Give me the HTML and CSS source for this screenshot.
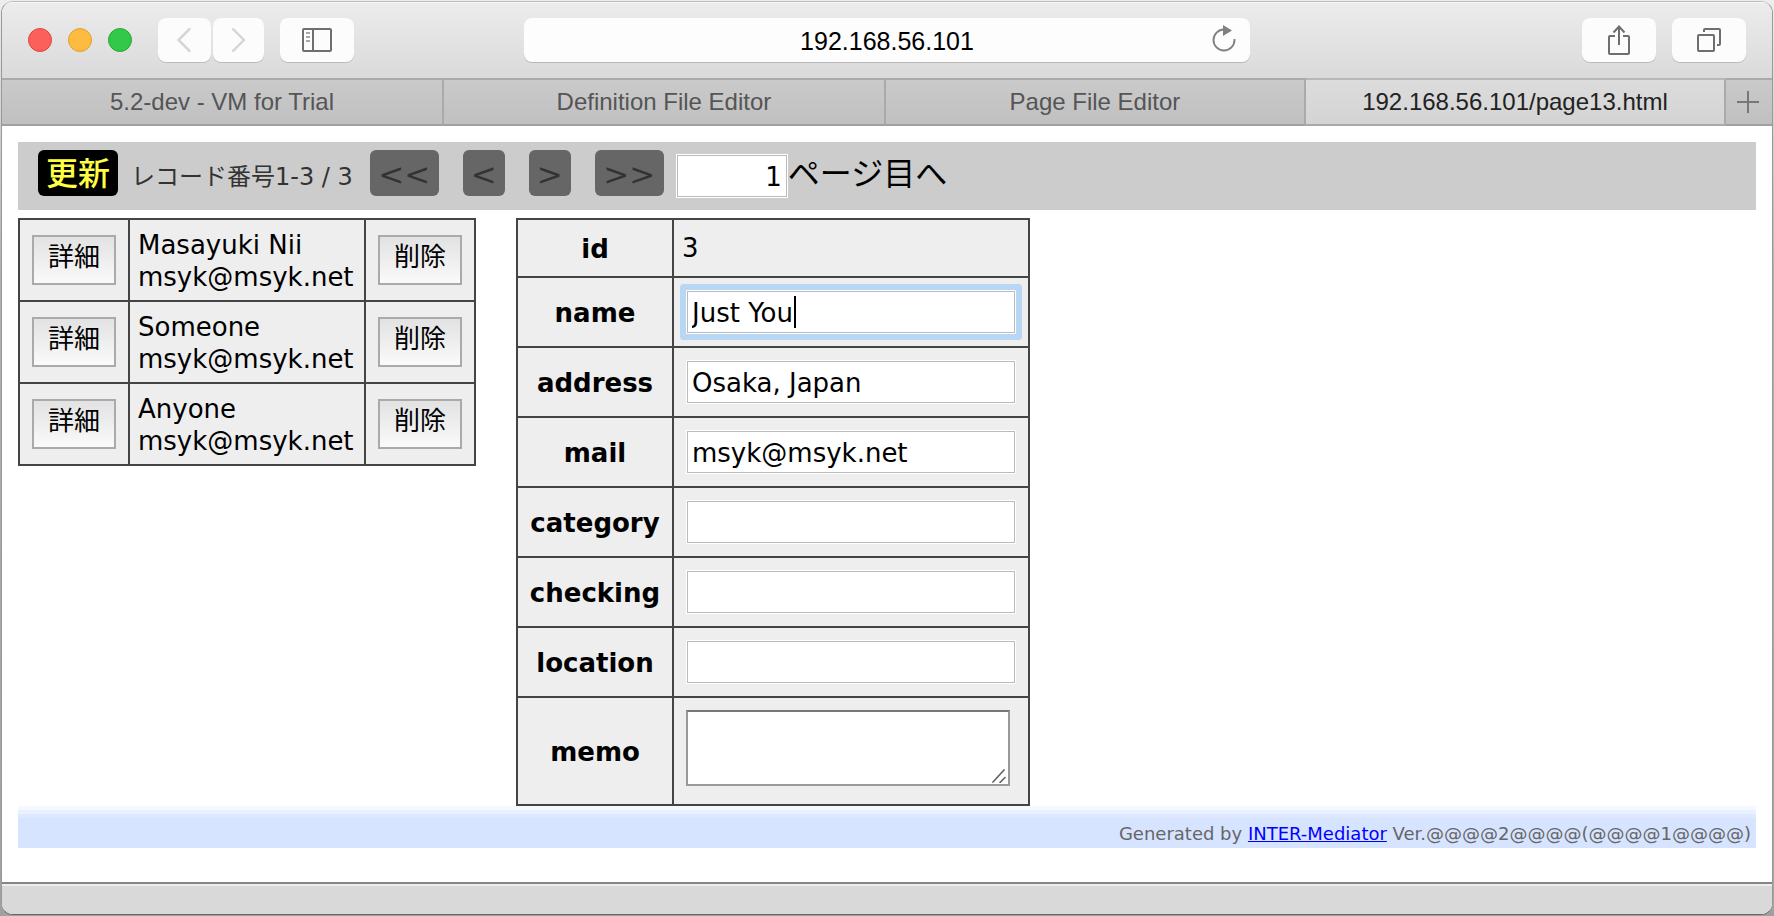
FILE: index.html
```html
<!DOCTYPE html>
<html lang="ja">
<head>
<meta charset="utf-8">
<title>192.168.56.101/page13.html</title>
<link rel="stylesheet" href="styles.css">
</head>
<body>
<div class="window">
  <header class="toolbar">
    <div class="tools tools-left">
      <div class="lights">
        <button class="light red" aria-label="Close"></button>
        <button class="light amber" aria-label="Minimize"></button>
        <button class="light green" aria-label="Zoom"></button>
      </div>
      <div class="history">
        <button class="tool back" aria-label="Back"><svg width="52" height="44" viewBox="0 0 52 44"><path d="M30.500 11 19.500 22 30.500 33" fill="none" stroke="#d6d6d6" stroke-width="2.500" stroke-linecap="round"/></svg></button>
        <button class="tool forward" aria-label="Forward"><svg width="52" height="44" viewBox="0 0 52 44"><path d="M20.500 11 31.500 22 20.500 33" fill="none" stroke="#d6d6d6" stroke-width="2.500" stroke-linecap="round"/></svg></button>
      </div>
      <button class="tool" aria-label="Sidebar"><svg width="30" height="24" viewBox="0 0 30 24"><rect x="1" y="1" width="28" height="22" rx="1" fill="none" stroke="#6e6e6e" stroke-width="2"/><path d="M11 1V23" stroke="#6e6e6e" stroke-width="2"/><path d="M4 5H8M4 9H8M4 13H8" stroke="#8a8a8a" stroke-width="1.700"/></svg></button>
    </div>
    <div class="address">
      <input class="url" type="text" value="192.168.56.101" aria-label="Address">
      <button class="reload" aria-label="Reload"><svg width="24" height="28" viewBox="0 0 24 28"><path d="M12 5.500A10.500 10.500 0 1 0 22.500 16V15" fill="none" stroke="#808080" stroke-width="1.900"/><path d="M11 1V12L20 6.500Z" fill="#808080"/></svg></button>
    </div>
    <div class="tools tools-right">
      <button class="tool" aria-label="Share"><svg width="24" height="32" viewBox="0 0 24 32"><path d="M8 12H3Q2 12 2 13V29Q2 30 3 30H21Q22 30 22 29V13Q22 12 21 12H16" fill="none" stroke="#6e6e6e" stroke-width="2"/><path d="M12 21V3M6.500 8.500 12 2.500 17.500 8.500" fill="none" stroke="#6e6e6e" stroke-width="2"/></svg></button>
      <button class="tool" aria-label="Show all tabs"><svg width="26" height="26" viewBox="0 0 26 26"><rect x="2" y="8" width="16" height="16" rx="1" fill="none" stroke="#6e6e6e" stroke-width="2"/><path d="M8 5V3Q8 2 9 2H23Q24 2 24 3V17Q24 18 23 18H21" fill="none" stroke="#6e6e6e" stroke-width="2"/></svg></button>
    </div>
  </header>
  <nav class="tabs">
    <a class="tab wide" href="#">5.2-dev - VM for Trial</a>
    <a class="tab wide" href="#">Definition File Editor</a>
    <a class="tab" href="#">Page File Editor</a>
    <a class="tab current" href="#">192.168.56.101/page13.html</a>
    <button class="add" aria-label="New tab"><svg width="22" height="22" viewBox="0 0 22 22"><path d="M11 0V22M0 11H22" stroke="#777" stroke-width="2"/></svg></button>
  </nav>
  <main class="page">
    <div class="pager">
      <button class="update">更新</button>
      <span class="count">レコード番号1-3 / 3</span>
      <div class="steps">
        <button class="step double">&lt;&lt;</button>
        <button class="step">&lt;</button>
        <button class="step">&gt;</button>
        <button class="step double">&gt;&gt;</button>
      </div>
      <input class="field jump" id="jump" type="text" value="1">
      <label for="jump">ページ目へ</label>
    </div>
    <div class="columns">
      <table class="grid">
        <tr><td class="action"><button class="push">詳細</button></td><td class="person">Masayuki Nii<br>msyk@msyk.net</td><td class="action"><button class="push">削除</button></td></tr>
        <tr><td class="action"><button class="push">詳細</button></td><td class="person">Someone<br>msyk@msyk.net</td><td class="action"><button class="push">削除</button></td></tr>
        <tr><td class="action"><button class="push">詳細</button></td><td class="person">Anyone<br>msyk@msyk.net</td><td class="action"><button class="push">削除</button></td></tr>
      </table>
      <table class="grid detail">
        <tr><th>id</th><td>3</td></tr>
        <tr><th><label for="name">name</label></th><td><div class="cell"><input class="field active" id="name" type="text" value="Just You"><span class="caret"></span></div></td></tr>
        <tr><th><label for="address">address</label></th><td><div class="cell"><input class="field" id="address" type="text" value="Osaka, Japan"></div></td></tr>
        <tr><th><label for="mail">mail</label></th><td><div class="cell"><input class="field" id="mail" type="text" value="msyk@msyk.net"></div></td></tr>
        <tr><th><label for="category">category</label></th><td><div class="cell"><input class="field" id="category" type="text"></div></td></tr>
        <tr><th><label for="checking">checking</label></th><td><div class="cell"><input class="field" id="checking" type="text"></div></td></tr>
        <tr><th><label for="location">location</label></th><td><div class="cell"><input class="field" id="location" type="text"></div></td></tr>
        <tr><th><label for="memo">memo</label></th><td><div class="cell memo-cell"><textarea class="memo" id="memo"></textarea><svg class="grip" width="14" height="14" viewBox="0 0 14 14"><path d="M1 13 12 1M8 13.500 13 8.500" stroke="#666" stroke-width="1.700" stroke-linecap="round"/></svg></div></td></tr>
      </table>
    </div>
    <footer class="credit">Generated by <a href="#">INTER-Mediator</a> Ver.@@@@2@@@@(@@@@1@@@@)</footer>
  </main>
  <div class="statusbar"></div>
</div>
</body>
</html>
```
FILE: styles.css
```css
* { box-sizing: border-box; }
body {
  display: flow-root;
  margin: 0;
  background: linear-gradient(#ededed, #b0b0b0 30%, #a0a0a0);
  font-family: "DejaVu Sans", "Noto Sans CJK JP", sans-serif;
  font-size: 26px;
  line-height: 32px;
  color: #000;
}
button, input, textarea { font: inherit; color: inherit; margin: 0; }
button { border: 0; padding: 0; }
svg { display: block; }

.window {
  display: flex;
  flex-direction: column;
  min-height: calc(100vh - 2px);
  margin: 1px;
  border: 1px solid #999;
  border-top-color: #bbb;
  border-bottom-color: #666;
  border-radius: 12px;
  background: #fff;
  overflow: hidden;
}

/* Browser toolbar */
.toolbar {
  display: grid;
  grid-template-columns: 1fr 41% 1fr;
  align-items: center;
  height: 76px;
  background: linear-gradient(#ececec, #dadada);
  box-shadow: inset 0 1px #f8f8f8;
}
.tools { display: flex; align-items: center; gap: 16px; }
.tools-left { padding-left: 26px; }
.tools-right { justify-content: flex-end; padding-right: 26px; }
.lights { display: flex; gap: 16px; margin-right: 10px; }
.light { width: 24px; height: 24px; border: 1px solid; border-radius: 50%; }
.red { background: #fc605b; border-color: #e0453f; }
.amber { background: #fdbc40; border-color: #dfa035; }
.green { background: #34c84a; border-color: #27a938; }
.history { display: flex; gap: 2px; }
.tool {
  display: flex;
  align-items: center;
  justify-content: center;
  width: 74px;
  height: 44px;
  border-radius: 8px;
  background: #fcfcfc;
  box-shadow: 0 1px #bbb;
}
.back { width: 53px; }
.forward { width: 51px; }
.address { position: relative; }
.url {
  display: block;
  width: 100%;
  height: 44px;
  padding: 2px 0 0;
  border: 0;
  border-radius: 8px;
  background: #fdfdfd;
  box-shadow: 0 1px #b8b8b8;
  font-family: "Liberation Sans", sans-serif;
  font-size: 25px;
  text-align: center;
}
.reload { position: absolute; right: 14px; top: 6px; background: none; }

/* Tabs */
.tabs {
  display: flex;
  height: 48px;
  background: #c5c5c5;
  font: 24px/44px "Liberation Sans", sans-serif;
}
.tab, .add {
  border-top: 2px solid #aaa;
  border-bottom: 2px solid #a0a0a0;
  background: linear-gradient(#cacaca, #c0c0c0);
}
.tab {
  flex: 420 1 0;
  border-right: 2px solid #aaa;
  color: #555;
  text-align: center;
  text-decoration: none;
  white-space: nowrap;
}
.wide { flex-grow: 442; }
.current { background: linear-gradient(#dcdcdc, #d4d4d4); border-top-color: #b8b8b8; border-bottom-color: #aaa; color: #222; }
.add { display: flex; flex: 0 0 46px; align-items: center; justify-content: center; padding-right: 2px; }

/* Page */
.page { flex: 1; padding: 16px; }
.pager {
  display: flex;
  align-items: center;
  height: 68px;
  padding: 0 20px 6px;
  background: #ccc;
  font-size: 32px;
}
.update, .step { height: 46px; border-radius: 6px; }
.update { padding: 2px 8px 0; background: #000; color: #ff4; font-weight: 500; }
.count { margin: 8px 17px 0 13px; font-size: 24px; color: #333; }
.steps { display: flex; gap: 24px; margin-right: 12px; }
.step { width: 42px; padding-top: 2px; background: #666; color: #333; font-size: 31px; }
.double { width: 69px; }
.field {
  display: block;
  width: 330px;
  height: 44px;
  padding: 2px 5px 0;
  border: 1px solid #fff;
  background: #fff;
  box-shadow: inset 0 0 0 1px #bbb;
  outline: 0;
}
.jump { width: 112px; margin-top: 6px; font-size: 26px; text-align: right; }
.pager label { padding-top: 2px; }
.columns { display: flex; align-items: flex-start; gap: 40px; padding-top: 8px; }
.grid { border-collapse: collapse; background: #eee; }
.grid td, .grid th { padding: 0 8px; border: 2px solid #444; text-align: left; white-space: nowrap; }
.grid tr { height: 82px; }
.grid .action { padding: 0 12px; }
.grid .person { width: 236px; padding-top: 2px; }
.push {
  display: block;
  width: 84px;
  height: 50px;
  padding-bottom: 6px;
  border: 2px solid #aaa;
  background: linear-gradient(#e2e2e2, #fafafa);
}
.grid.detail th { width: 156px; padding-top: 2px; text-align: center; }
.detail tr { height: 70px; }
.detail tr:first-child { height: 58px; }
.detail tr:last-child { height: 108px; }
.cell { position: relative; padding: 0 4px; }
.active { border-radius: 1px; box-shadow: inset 0 0 0 1px #bbb, 0 0 0 6px #b8d7f5; }
.caret { position: absolute; left: 112px; top: 6px; width: 2px; height: 32px; background: #000; }
.memo-cell { padding: 0 4px 6px; }
.memo { display: block; width: 324px; height: 76px; border: 2px solid #999; border-top-color: #777; background: #fff; resize: none; }
.grip { position: absolute; right: 14px; bottom: 9px; }
.credit {
  height: 42px;
  padding: 12px 5px 0;
  background: linear-gradient(#f5f8ff 4px, #e9f0ff 4px 8px, #dee9ff 8px 12px, #d6e4ff 12px);
  font-size: 18px;
  color: #666;
  text-align: right;
}
.credit a { color: #00f; }
.statusbar { height: 32px; border-top: 2px solid #858585; background: #d9d9d9; box-shadow: inset 0 2px #ededed; }
```
